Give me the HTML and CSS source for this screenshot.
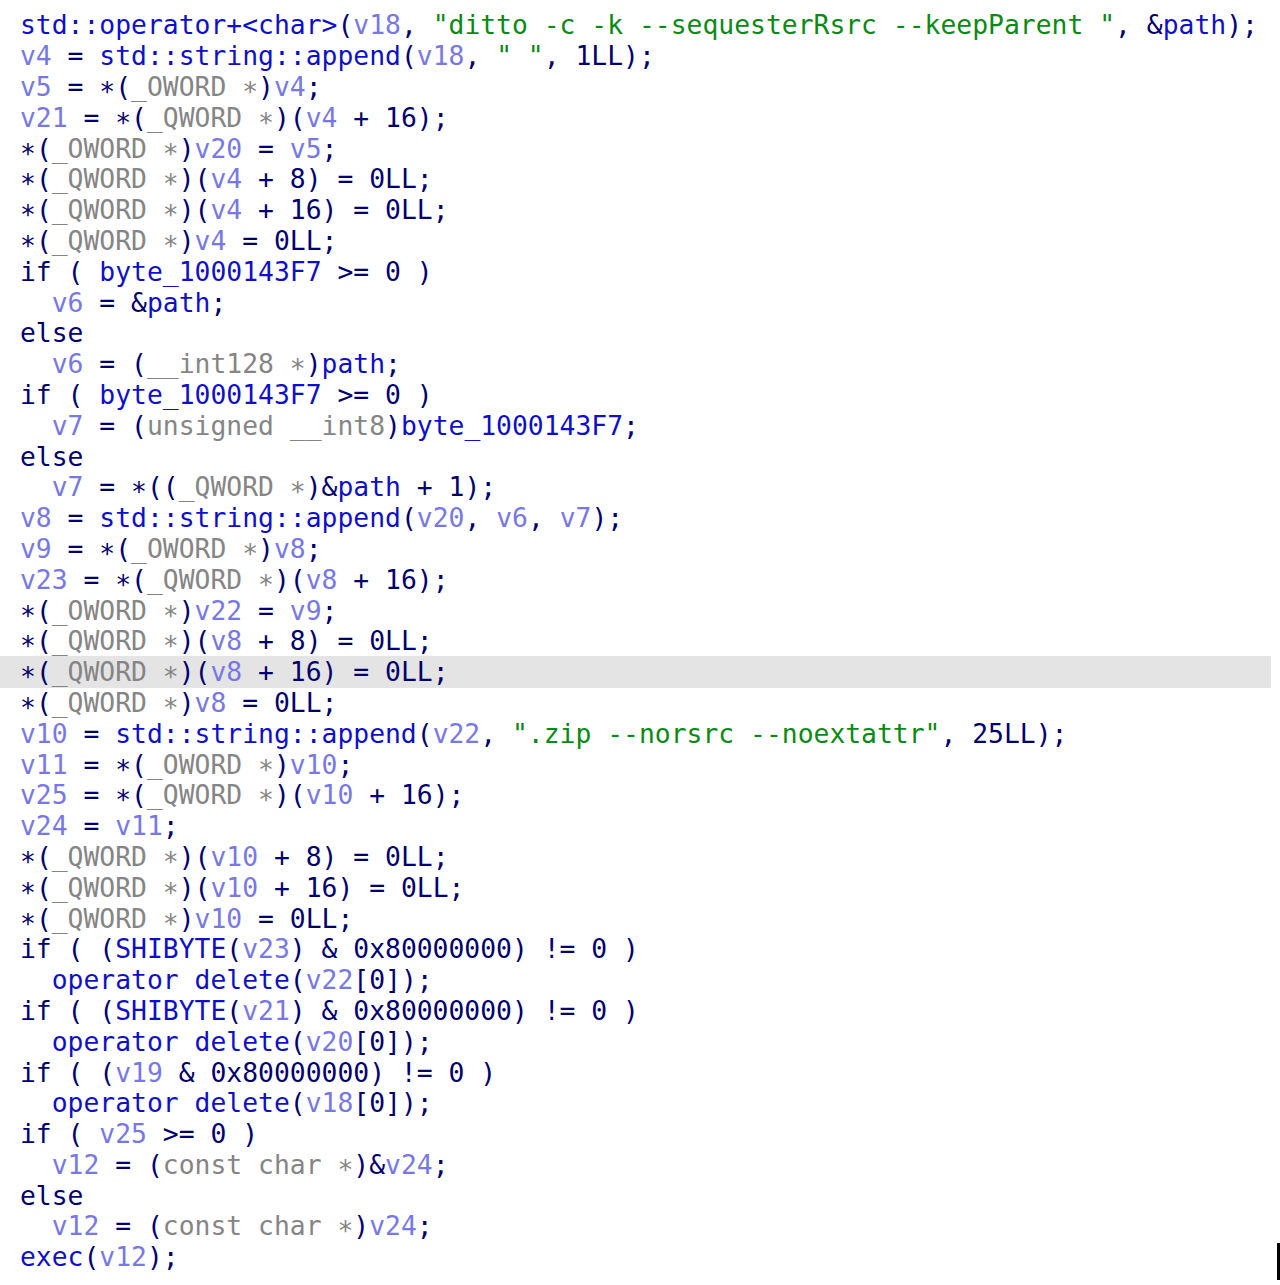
FILE: index.html
```html
<!DOCTYPE html>
<html>
<head>
<meta charset="utf-8">
<link rel="stylesheet" href="styles.css">
</head>
<body>
<div class="code">
<div class="ln"><span class="f">std::operator+&lt;char&gt;</span>(<span class="v">v18</span>, <span class="s">"ditto -c -k --sequesterRsrc --keepParent "</span>, &amp;<span class="f">path</span>);</div>
<div class="ln"><span class="v">v4</span> = <span class="f">std::string::append</span>(<span class="v">v18</span>, <span class="s">" "</span>, 1LL);</div>
<div class="ln"><span class="v">v5</span> = <span class="a">*</span>(<span class="t">_OWORD <span class="a">*</span></span>)<span class="v">v4</span>;</div>
<div class="ln"><span class="v">v21</span> = <span class="a">*</span>(<span class="t">_QWORD <span class="a">*</span></span>)(<span class="v">v4</span> + 16);</div>
<div class="ln"><span class="a">*</span>(<span class="t">_OWORD <span class="a">*</span></span>)<span class="v">v20</span> = <span class="v">v5</span>;</div>
<div class="ln"><span class="a">*</span>(<span class="t">_QWORD <span class="a">*</span></span>)(<span class="v">v4</span> + 8) = 0LL;</div>
<div class="ln"><span class="a">*</span>(<span class="t">_QWORD <span class="a">*</span></span>)(<span class="v">v4</span> + 16) = 0LL;</div>
<div class="ln"><span class="a">*</span>(<span class="t">_QWORD <span class="a">*</span></span>)<span class="v">v4</span> = 0LL;</div>
<div class="ln">if ( <span class="f">byte_1000143F7</span> &gt;= 0 )</div>
<div class="ln">  <span class="v">v6</span> = &amp;<span class="f">path</span>;</div>
<div class="ln">else</div>
<div class="ln">  <span class="v">v6</span> = (<span class="t">__int128 <span class="a">*</span></span>)<span class="f">path</span>;</div>
<div class="ln">if ( <span class="f">byte_1000143F7</span> &gt;= 0 )</div>
<div class="ln">  <span class="v">v7</span> = (<span class="t">unsigned __int8</span>)<span class="f">byte_1000143F7</span>;</div>
<div class="ln">else</div>
<div class="ln">  <span class="v">v7</span> = <span class="a">*</span>((<span class="t">_QWORD <span class="a">*</span></span>)&amp;<span class="f">path</span> + 1);</div>
<div class="ln"><span class="v">v8</span> = <span class="f">std::string::append</span>(<span class="v">v20</span>, <span class="v">v6</span>, <span class="v">v7</span>);</div>
<div class="ln"><span class="v">v9</span> = <span class="a">*</span>(<span class="t">_OWORD <span class="a">*</span></span>)<span class="v">v8</span>;</div>
<div class="ln"><span class="v">v23</span> = <span class="a">*</span>(<span class="t">_QWORD <span class="a">*</span></span>)(<span class="v">v8</span> + 16);</div>
<div class="ln"><span class="a">*</span>(<span class="t">_OWORD <span class="a">*</span></span>)<span class="v">v22</span> = <span class="v">v9</span>;</div>
<div class="ln"><span class="a">*</span>(<span class="t">_QWORD <span class="a">*</span></span>)(<span class="v">v8</span> + 8) = 0LL;</div>
<div class="ln hl"><span class="a">*</span>(<span class="t">_QWORD <span class="a">*</span></span>)(<span class="v">v8</span> + 16) = 0LL;</div>
<div class="ln"><span class="a">*</span>(<span class="t">_QWORD <span class="a">*</span></span>)<span class="v">v8</span> = 0LL;</div>
<div class="ln"><span class="v">v10</span> = <span class="f">std::string::append</span>(<span class="v">v22</span>, <span class="s">".zip --norsrc --noextattr"</span>, 25LL);</div>
<div class="ln"><span class="v">v11</span> = <span class="a">*</span>(<span class="t">_OWORD <span class="a">*</span></span>)<span class="v">v10</span>;</div>
<div class="ln"><span class="v">v25</span> = <span class="a">*</span>(<span class="t">_QWORD <span class="a">*</span></span>)(<span class="v">v10</span> + 16);</div>
<div class="ln"><span class="v">v24</span> = <span class="v">v11</span>;</div>
<div class="ln"><span class="a">*</span>(<span class="t">_QWORD <span class="a">*</span></span>)(<span class="v">v10</span> + 8) = 0LL;</div>
<div class="ln"><span class="a">*</span>(<span class="t">_QWORD <span class="a">*</span></span>)(<span class="v">v10</span> + 16) = 0LL;</div>
<div class="ln"><span class="a">*</span>(<span class="t">_QWORD <span class="a">*</span></span>)<span class="v">v10</span> = 0LL;</div>
<div class="ln">if ( (<span class="f">SHIBYTE</span>(<span class="v">v23</span>) &amp; 0x80000000) != 0 )</div>
<div class="ln">  <span class="f">operator delete</span>(<span class="v">v22</span>[0]);</div>
<div class="ln">if ( (<span class="f">SHIBYTE</span>(<span class="v">v21</span>) &amp; 0x80000000) != 0 )</div>
<div class="ln">  <span class="f">operator delete</span>(<span class="v">v20</span>[0]);</div>
<div class="ln">if ( (<span class="v">v19</span> &amp; 0x80000000) != 0 )</div>
<div class="ln">  <span class="f">operator delete</span>(<span class="v">v18</span>[0]);</div>
<div class="ln">if ( <span class="v">v25</span> &gt;= 0 )</div>
<div class="ln">  <span class="v">v12</span> = (<span class="t">const char <span class="a">*</span></span>)&amp;<span class="v">v24</span>;</div>
<div class="ln">else</div>
<div class="ln">  <span class="v">v12</span> = (<span class="t">const char <span class="a">*</span></span>)<span class="v">v24</span>;</div>
<div class="ln"><span class="f">exec</span>(<span class="v">v12</span>);</div>
</div>
<div class="edge"></div>
</body>
</html>
```
FILE: styles.css
```css
html, body {
  margin: 0;
  padding: 0;
  background: #ffffff;
}
body {
  position: relative;
  width: 1280px;
  height: 1285px;
  overflow: hidden;
}
.code {
  padding-top: 10.4px;
  font-family: "DejaVu Sans Mono", monospace;
  font-size: 26.36px;
  line-height: 30.8px;
  color: #00006e;
}
.ln {
  white-space: pre;
  width: 1271px;
  box-sizing: border-box;
  padding-left: 20px;
  height: 30.8px;
}
.hl {
  background: #e4e4e4;
  margin-top: -0.8px;
  padding-top: 0.8px;
  height: 32px;
  margin-bottom: -0.4px;
}
.a {
  vertical-align: -0.2em;
  line-height: 0;
}
.f { color: #0f0fc8; }
.v { color: #7878e4; }
.t { color: #858585; }
.s { color: #0a8a14; }
.edge {
  position: absolute;
  right: 0;
  top: 1243px;
  width: 3px;
  height: 37px;
  background: #000;
}
```
